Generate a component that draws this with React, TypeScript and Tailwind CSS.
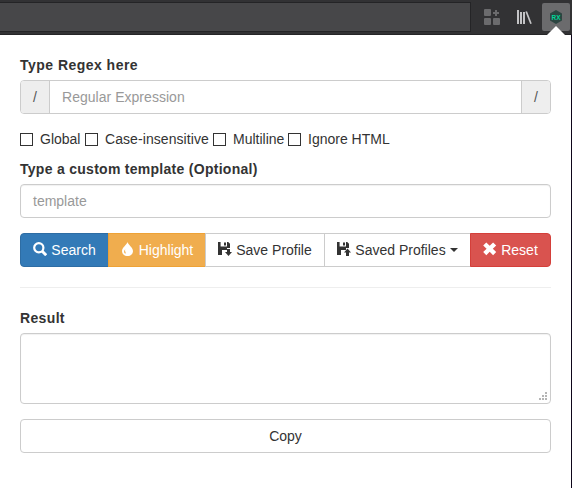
import React from "react";

const icon = "relative -top-px h-[14px] w-[14px] shrink-0";

const SearchIcon = () => (
  <svg className={icon} viewBox="0 0 14 14" fill="none" stroke="currentColor">
    <circle cx="5.8" cy="5.8" r="4.6" strokeWidth="2.2" />
    <path d="M9 9 13.2 13.2" strokeWidth="2.9" />
  </svg>
);

const DropIcon = () => (
  <svg className={icon} viewBox="0 0 14 14" fill="currentColor">
    <path
      fillRule="evenodd"
      d="M6.5 0C7 2.4 12 5.6 12 9.2A5.2 4.9 0 0 1 6.5 14 5.2 4.9 0 0 1 1 9.2C1 5.6 6 2.4 6.5 0ZM4.2 7.2C3 8.6 2.7 10 3.7 11.2 4.5 12 5.1 11.1 4.5 10.2 3.9 9.2 4 8.2 4.2 7.2Z"
    />
  </svg>
);

const DiskIcon = ({ up = false }: { up?: boolean }) => (
  <svg className={icon} viewBox="0 0 14 14" fill="currentColor">
    <path d="M0 0H2.6V4.6H9V0H10.2L12 1.8V6H9V8H4V13H0ZM6 0.5H8V3.6H6Z" fillRule="evenodd" />
    {up ? <path d="M10.5 6.6 14 10.6H12V14H9V10.6H7Z" /> : <path d="M9 7H12V10H14L10.5 14 7 10H9Z" />}
  </svg>
);

const CrossIcon = () => (
  <svg className={icon} viewBox="0 0 14 14" fill="currentColor">
    <path d="M3.3 .4 6.7 3.8 10.1 .4 13.2 3.5 9.8 6.8 13.2 10.1 10.1 13.2 6.7 9.8 3.3 13.2 .2 10.1 3.6 6.8 .2 3.5Z" />
  </svg>
);

const Toolbar = () => (
  <div className="flex h-[35px] border-b border-[#252527] bg-[#323234]">
    <div className="mt-[2px] h-[30px] w-[471px] border-y border-r border-[#242426] bg-[#474749]" />
    <svg className="mt-[8px] ml-[13px] h-[18px] w-[18px]" viewBox="0 0 18 18" fill="#6b6b6d">
      <rect x="0" y="1" width="7" height="7" rx="1" />
      <rect x="0" y="10" width="7" height="7" rx="1" />
      <rect x="9" y="10" width="7" height="7" rx="1" />
      <path d="M11 2h2v2h2v2h-2v2h-2V6H9V4h2Z" />
    </svg>
    <svg className="mt-[9px] ml-[14px] h-[16px] w-[18px]" viewBox="0 0 18 16" fill="none" stroke="#c4c4c6" strokeWidth="2">
      <path d="M2 1V15M5 3V15M8 3V15" />
      <path d="M10.2 2.5 15 14.8" strokeWidth="1.7" />
    </svg>
    <div className="relative mt-[3px] ml-[8px] h-[28px] w-[28px] rounded-[2px] bg-[#6b6b6d]">
      <svg className="absolute top-[7px] left-[7px] h-[14px] w-[14px]" viewBox="0 0 14 14">
        <path d="M7 0 13 3.5V10.5L7 14 1 10.5V3.5Z" fill="#2c4541" />
        <text x="7" y="9.6" textAnchor="middle" textLength="9" lengthAdjust="spacingAndGlyphs" className="font-['Liberation_Sans',sans-serif] text-[7px] font-bold" fill="#00d69a">RX</text>
      </svg>
      <svg className="absolute top-[23px] left-[5px] h-[9px] w-[18px]" viewBox="0 0 18 9">
        <path d="M0 9 9 0 18 9Z" fill="#fff" />
      </svg>
    </div>
  </div>
);

const Check = ({ label, className }: { label: string; className: string }) => (
  <label className={`flex items-center gap-[7px] whitespace-nowrap ${className}`}>
    <span className="h-[13px] w-[13px] shrink-0 border border-[#333]" />
    {label}
  </label>
);

const btn = "flex h-[34px] items-center justify-center gap-1 border whitespace-nowrap";

export default function App() {
  return (
    <div className="h-[488px] w-[572px] overflow-hidden bg-white font-['Liberation_Sans',Arial,sans-serif] text-[14px] leading-5 text-[#333]">
      <Toolbar />
      <main className="h-[453px] border-r border-[#0e061a] pt-[20px] pr-[20px] pl-[20px]">
        <div className="font-bold tracking-[0.47px]">Type Regex here</div>
        <div className="mt-[5px] flex h-[34px] overflow-hidden rounded-[4px] border border-[#ccc] text-[#555]">
          <span className="flex w-[29px] items-center justify-center border-r border-[#ccc] bg-[#eee]">/</span>
          <span className="flex flex-1 items-center px-3 tracking-[0.03px] text-[#999]">Regular Expression</span>
          <span className="flex w-[29px] items-center justify-center border-l border-[#ccc] bg-[#eee]">/</span>
        </div>
        <div className="mt-[15px] flex gap-1">
          <Check label="Global" className="w-[61px]" />
          <Check label="Case-insensitive" className="w-[124px] tracking-[0.07px]" />
          <Check label="Multiline" className="w-[71px]" />
          <Check label="Ignore HTML" className="w-[102px]" />
        </div>
        <div className="mt-[10px] font-bold tracking-[0.28px]">Type a custom template (Optional)</div>
        <div className="mt-[5px] flex h-[34px] items-center rounded-[4px] border border-[#ccc] px-3 text-[#999] shadow-[inset_0_1px_1px_rgba(0,0,0,0.06)]">template</div>
        <div className="mt-[15px] flex">
          <div className={`${btn} w-[89px] rounded-l-[4px] border-[#2e6da4] bg-[#337ab7] text-white`}>
            <SearchIcon /> Search
          </div>
          <div className={`${btn} -ml-px w-[98px] border-[#eea236] bg-[#f0ad4e] text-white`}>
            <DropIcon /> Highlight
          </div>
          <div className={`${btn} -ml-px w-[120px] border-[#ccc] bg-white`}>
            <DiskIcon /> Save Profile
          </div>
          <div className={`${btn} -ml-px w-[147px] border-[#ccc] bg-white`}>
            <DiskIcon up /> Saved Profiles
            <span className="h-0 w-0 border-x-4 border-t-4 border-x-transparent border-t-[#333]" />
          </div>
          <div className={`${btn} -ml-px w-[81px] rounded-r-[4px] border-[#d43f3a] bg-[#d9534f] text-white`}>
            <CrossIcon /> Reset
          </div>
        </div>
        <div className="mt-[20px] border-t border-[#eee]" />
        <div className="mt-[20px] font-bold tracking-[0.35px]">Result</div>
        <div className="mt-[5px] flex h-[71px] items-end justify-end rounded-[4px] border border-[#ccc] p-[2px] shadow-[inset_0_1px_1px_rgba(0,0,0,0.06)]">
          <svg className="h-[9px] w-[9px]" viewBox="0 0 9 9" fill="#b5b5b5">
            <path d="M6 0h2v2H6ZM3 3h2v2H3ZM6 3h2v2H6ZM0 6h2v2H0ZM3 6h2v2H3ZM6 6h2v2H6Z" />
          </svg>
        </div>
        <div className="mt-[15px] flex h-[34px] items-center justify-center rounded-[4px] border border-[#ccc]">Copy</div>
      </main>
    </div>
  );
}
